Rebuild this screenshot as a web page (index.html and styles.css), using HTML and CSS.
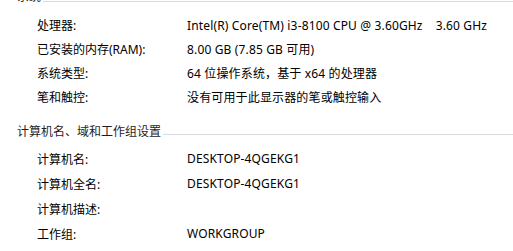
FILE: index.html
```html
<!DOCTYPE html>
<html lang="zh-CN">
<head>
  <meta charset="UTF-8" />
  <title>系统</title>
  <link rel="stylesheet" href="styles.css">
</head>
<body>
  <div class="panel">
    <div class="section first">
      <div class="heading"><span>系统</span><div class="rule"></div></div>
      <div class="rows">
        <div class="row"><span class="label">处理器:</span><span class="value">Intel(R) Core(TM) i3-8100 CPU @ 3.60GHz<span class="speed">3.60 GHz</span></span></div>
        <div class="row"><span class="label">已安装的内存(RAM):</span><span class="value">8.00 GB (7.85 GB 可用)</span></div>
        <div class="row"><span class="label">系统类型:</span><span class="value">64 位操作系统，基于 x64 的处理器</span></div>
        <div class="row"><span class="label">笔和触控:</span><span class="value">没有可用于此显示器的笔或触控输入</span></div>
      </div>
    </div>
    <div class="section second">
      <div class="heading"><span>计算机名、域和工作组设置</span><div class="rule"></div></div>
      <div class="rows">
        <div class="row"><span class="label">计算机名:</span><span class="value">DESKTOP-4QGEKG1</span></div>
        <div class="row"><span class="label">计算机全名:</span><span class="value">DESKTOP-4QGEKG1</span></div>
        <div class="row"><span class="label">计算机描述:</span><span class="value"></span></div>
        <div class="row"><span class="label">工作组:</span><span class="value">WORKGROUP</span></div>
      </div>
    </div>
  </div>
</body>
</html>
```

FILE: styles.css
```css
body {
  margin: 0;
  background: #fff;
  color: #000;
  font-family: "Noto Sans", "Noto Sans CJK SC", sans-serif;
  font-size: 12px;
  overflow: hidden;
}

.panel {
  margin-top: -11px;
  padding-left: 17px;
}

.heading {
  display: flex;
  align-items: center;
  height: 16px;
  line-height: 16px;
  color: #1e1e1e;
}

.heading span {
  padding-right: 2px;
}

.rule {
  flex: 1;
  height: 1px;
  background: #d6dbe0;
  margin-top: 4px;
}

.first .rule {
  margin-top: 8px;
}

.rows {
  padding-left: 20px;
}

.first .rows {
  margin-top: 8px;
}

.second {
  margin-top: 15px;
}

.second .rows {
  margin-top: 6px;
}

.row {
  display: flex;
  align-items: center;
  height: 24px;
}

.second .row {
  height: 25px;
}

.label {
  width: 150px;
  flex-shrink: 0;
}

.value {
  letter-spacing: 0.15px;
}

.speed {
  margin-left: 13px;
}
```
